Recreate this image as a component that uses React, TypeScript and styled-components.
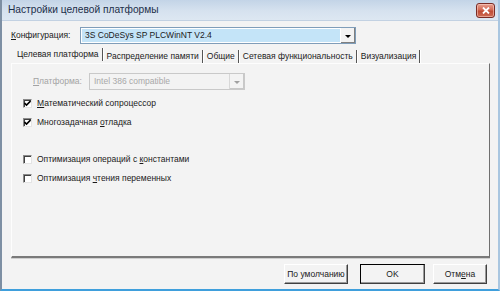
import React from 'react';
import styled, { createGlobalStyle } from 'styled-components';

const GlobalStyle = createGlobalStyle`
  html, body {
    margin: 0;
    padding: 0;
    background: #f3f3f3;
  }
  body {
    font-family: "Liberation Sans", Arial, sans-serif;
    font-size: 8.5px;
    line-height: 1;
    color: #1a1a1a;
  }
`;

const Window = styled.div`
  width: 500px;
  height: 291px;
  box-sizing: border-box;
  display: flex;
  flex-direction: column;
  background: #f3f3f3;
  border-left: 2px solid #7d8fa3;
  border-right: 2px solid #a9c6e0;
  border-bottom: 2px solid #3f9fdc;
  overflow: hidden;
`;

const TitleBar = styled.div`
  height: 20px;
  flex: none;
  display: flex;
  align-items: center;
  justify-content: space-between;
  padding: 0 3px 0 6px;
  background: linear-gradient(to bottom, #c3d4e7 0%, #d6e2ef 55%, #dde7f2 100%);
  border-bottom: 1px solid #c2d1e2;
`;

const Title = styled.span`
  font-size: 10.2px;
  color: #1c2f4a;
`;

const CloseButton = styled.div`
  width: 17px;
  height: 13px;
  border-radius: 3px;
  border: 1px solid #7a2c25;
  background: linear-gradient(to bottom, #e8a090 0%, #d26a55 45%, #bf4b35 55%, #cf6d55 100%);
  display: flex;
  align-items: center;
  justify-content: center;
  box-shadow: inset 0 0 0 1px rgba(255, 220, 210, 0.5);
`;

const Body = styled.div`
  flex: 1;
  display: flex;
  flex-direction: column;
  padding: 6px 6px 0 9px;
`;

const ConfigRow = styled.div`
  display: flex;
  align-items: center;
  height: 17px;
  flex: none;
`;

const Label = styled.label<{ $width: number; $disabled?: boolean }>`
  width: ${p => p.$width}px;
  flex: none;
  color: ${p => (p.$disabled ? '#a3a3a3' : 'inherit')};
`;

const Combo = styled.div<{ $width: number; $disabled?: boolean }>`
  width: ${p => p.$width}px;
  height: 17px;
  box-sizing: border-box;
  display: flex;
  align-items: stretch;
  border: 1px solid ${p => (p.$disabled ? '#c9c9c9' : '#7f9db9')};
  background: ${p => (p.$disabled ? '#f3f3f3' : '#fff')};
`;

const ComboText = styled.div<{ $selected?: boolean; $disabled?: boolean }>`
  flex: 1;
  display: flex;
  align-items: center;
  padding-left: 3px;
  margin: 1px 0 1px 1px;
  background: ${p => (p.$selected ? '#c4e4f8' : 'transparent')};
  color: ${p => (p.$disabled ? '#a8a8a8' : 'inherit')};
`;

const DropButton = styled.div<{ $disabled?: boolean }>`
  width: 14px;
  flex: none;
  display: flex;
  align-items: center;
  justify-content: center;
  background: #f3f3f3;
  border-left: 1px solid ${p => (p.$disabled ? '#d8d8d8' : '#fff')};
  box-shadow: inset -1px -1px 0 ${p => (p.$disabled ? '#c8c8c8' : '#808080')};
`;

const Arrow = styled.div<{ $disabled?: boolean }>`
  width: 0;
  height: 0;
  border-left: 3px solid transparent;
  border-right: 3px solid transparent;
  border-top: 3px solid ${p => (p.$disabled ? '#a0a0a0' : '#000')};
  margin-top: 1px;
`;

const TabStrip = styled.div`
  display: flex;
  align-items: flex-end;
  height: 16px;
  flex: none;
  margin-top: 3px;
  padding-left: 2px;
`;

const Tab = styled.div<{ $active?: boolean }>`
  height: 13px;
  display: flex;
  align-items: center;
  padding: 0 3px 0 4px;
  margin-bottom: ${p => (p.$active ? '2px' : '0')};
  border-right: 1px solid #555;
  box-shadow: 1px 0 0 #fff;
  white-space: nowrap;
`;

const Pane = styled.div`
  width: 479px;
  height: 195px;
  flex: none;
  box-sizing: border-box;
  border-top: 1px solid #fdfdfd;
  border-left: 1px solid #fdfdfd;
  border-right: 1px solid #6f6f6f;
  border-bottom: 2px solid #7a7a7a;
  box-shadow: 0 1px 0 #cfcfcf;
  padding: 9px 0 0 11px;
  display: flex;
  flex-direction: column;
`;

const PlatformRow = styled.div`
  display: flex;
  align-items: center;
  height: 17px;
  flex: none;
  padding-left: 10px;
  margin-bottom: 4px;
`;

const CheckRow = styled.div<{ $gapTop?: number }>`
  display: flex;
  align-items: center;
  height: 19px;
  flex: none;
  margin-top: ${p => p.$gapTop ?? 0}px;
`;

const Box = styled.div`
  width: 9px;
  height: 9px;
  box-sizing: border-box;
  border: 1px solid #8a8a8a;
  border-right-color: #e4e4e4;
  border-bottom-color: #e4e4e4;
  box-shadow: inset 1px 1px 0 #404040;
  background: #fff;
  margin-right: 5px;
  display: flex;
  align-items: center;
  justify-content: center;
`;

const Footer = styled.div`
  display: flex;
  justify-content: flex-end;
  padding-top: 6px;
  padding-right: 5px;
`;

const Button = styled.div<{ $width: number; $gap?: number; $default?: boolean }>`
  width: ${p => p.$width}px;
  height: 20px;
  margin-left: ${p => p.$gap ?? 0}px;
  box-sizing: border-box;
  display: flex;
  align-items: center;
  justify-content: center;
  background: #f3f3f3;
  border: 1px solid ${p => (p.$default ? '#000' : '#fff')};
  border-right-color: #404040;
  border-bottom-color: #404040;
  box-shadow: inset -1px -1px 0 #9a9a9a;
`;

const U = styled.span`
  text-decoration: underline;
`;

const Check = () => (
  <svg width="7" height="7" viewBox="0 0 7 7">
    <path d="M0.5 3 L2.5 5 L6.5 1" fill="none" stroke="#000" strokeWidth="1.6" />
  </svg>
);

const CheckBox: React.FC<{ checked?: boolean; gapTop?: number; children: React.ReactNode }> = ({
  checked,
  gapTop,
  children,
}) => (
  <CheckRow $gapTop={gapTop}>
    <Box>{checked && <Check />}</Box>
    <span>{children}</span>
  </CheckRow>
);

const tabs = [
  'Целевая платформа',
  'Распределение памяти',
  'Общие',
  'Сетевая функциональность',
  'Визуализация',
];

export default function App() {
  return (
    <>
      <GlobalStyle />
      <Window>
        <TitleBar>
          <Title>Настройки целевой платформы</Title>
          <CloseButton>
            <svg width="8" height="7" viewBox="0 0 8 7">
              <path d="M1 0.5 L7 6.5 M7 0.5 L1 6.5" stroke="#fff" strokeWidth="1.8" />
            </svg>
          </CloseButton>
        </TitleBar>
        <Body>
          <ConfigRow>
            <Label $width={69}>
              <U>К</U>онфигурация:
            </Label>
            <Combo $width={276}>
              <ComboText $selected>3S CoDeSys SP PLCWinNT V2.4</ComboText>
              <DropButton>
                <Arrow />
              </DropButton>
            </Combo>
          </ConfigRow>
          <TabStrip>
            {tabs.map((t, i) => (
              <Tab key={t} $active={i === 0}>
                {t}
              </Tab>
            ))}
          </TabStrip>
          <Pane>
            <PlatformRow>
              <Label $width={56} $disabled>
                <U>П</U>латформа:
              </Label>
              <Combo $width={156} $disabled>
                <ComboText $disabled>Intel 386 compatible</ComboText>
                <DropButton $disabled>
                  <Arrow $disabled />
                </DropButton>
              </Combo>
            </PlatformRow>
            <CheckBox checked>
              <U>М</U>атематический сопроцессор
            </CheckBox>
            <CheckBox checked>
              Многозадачная <U>о</U>тладка
            </CheckBox>
            <CheckBox gapTop={18}>
              Оптимизация операций с <U>к</U>онстантами
            </CheckBox>
            <CheckBox>
              Оптимизация <U>ч</U>тения переменных
            </CheckBox>
          </Pane>
          <Footer>
            <Button $width={64}>По умолчанию</Button>
            <Button $width={65} $gap={12} $default>
              OK
            </Button>
            <Button $width={54} $gap={8}>
              Отм<U>е</U>на
            </Button>
          </Footer>
        </Body>
      </Window>
    </>
  );
}
